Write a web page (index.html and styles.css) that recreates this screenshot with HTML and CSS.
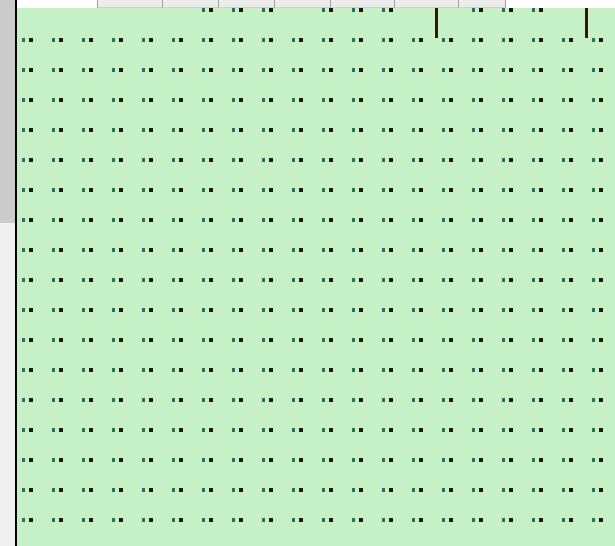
FILE: index.html
```html
<!DOCTYPE html>
<html>
<head>
<meta charset="utf-8">
<link rel="stylesheet" href="styles.css">
</head>
<body>
<div class="app">
  <aside class="side">
    <div class="side-top"></div>
    <div class="side-bottom"></div>
  </aside>
  <main class="main">
    <nav class="tabs">
      <span class="tab active"></span>
      <span class="tab w65"></span>
      <span class="tab w56"></span>
      <span class="tab w56"></span>
      <span class="tab w56"></span>
      <span class="tab w64"></span>
      <span class="tab w64"></span>
      <span class="tab w47 last"></span>
      <span class="tab-fill"></span>
    </nav>
    <section class="canvas">
      <div class="top-row">
        <i class="o"></i><i class="o"></i><i class="o"></i><i class="o"></i><i class="o"></i><i class="o"></i><i></i><i></i><i></i><i class="o"></i><i></i><i></i><i></i><i class="o"></i><i class="o"></i><i></i><i></i><i></i><i class="o"></i><i class="o"></i>
      </div>
      <div class="grid">
        <i></i><i></i><i></i><i></i><i></i><i></i><i></i><i></i><i></i><i></i><i></i><i></i><i></i><i></i><i></i><i></i><i></i><i></i><i></i><i></i>
        <i></i><i></i><i></i><i></i><i></i><i></i><i></i><i></i><i></i><i></i><i></i><i></i><i></i><i></i><i></i><i></i><i></i><i></i><i></i><i></i>
        <i></i><i></i><i></i><i></i><i></i><i></i><i></i><i></i><i></i><i></i><i></i><i></i><i></i><i></i><i></i><i></i><i></i><i></i><i></i><i></i>
        <i></i><i></i><i></i><i></i><i></i><i></i><i></i><i></i><i></i><i></i><i></i><i></i><i></i><i></i><i></i><i></i><i></i><i></i><i></i><i></i>
        <i></i><i></i><i></i><i></i><i></i><i></i><i></i><i></i><i></i><i></i><i></i><i></i><i></i><i></i><i></i><i></i><i></i><i></i><i></i><i></i>
        <i></i><i></i><i></i><i></i><i></i><i></i><i></i><i></i><i></i><i></i><i></i><i></i><i></i><i></i><i></i><i></i><i></i><i></i><i></i><i></i>
        <i></i><i></i><i></i><i></i><i></i><i></i><i></i><i></i><i></i><i></i><i></i><i></i><i></i><i></i><i></i><i></i><i></i><i></i><i></i><i></i>
        <i></i><i></i><i></i><i></i><i></i><i></i><i></i><i></i><i></i><i></i><i></i><i></i><i></i><i></i><i></i><i></i><i></i><i></i><i></i><i></i>
        <i></i><i></i><i></i><i></i><i></i><i></i><i></i><i></i><i></i><i></i><i></i><i></i><i></i><i></i><i></i><i></i><i></i><i></i><i></i><i></i>
        <i></i><i></i><i></i><i></i><i></i><i></i><i></i><i></i><i></i><i></i><i></i><i></i><i></i><i></i><i></i><i></i><i></i><i></i><i></i><i></i>
        <i></i><i></i><i></i><i></i><i></i><i></i><i></i><i></i><i></i><i></i><i></i><i></i><i></i><i></i><i></i><i></i><i></i><i></i><i></i><i></i>
        <i></i><i></i><i></i><i></i><i></i><i></i><i></i><i></i><i></i><i></i><i></i><i></i><i></i><i></i><i></i><i></i><i></i><i></i><i></i><i></i>
        <i></i><i></i><i></i><i></i><i></i><i></i><i></i><i></i><i></i><i></i><i></i><i></i><i></i><i></i><i></i><i></i><i></i><i></i><i></i><i></i>
        <i></i><i></i><i></i><i></i><i></i><i></i><i></i><i></i><i></i><i></i><i></i><i></i><i></i><i></i><i></i><i></i><i></i><i></i><i></i><i></i>
        <i></i><i></i><i></i><i></i><i></i><i></i><i></i><i></i><i></i><i></i><i></i><i></i><i></i><i></i><i></i><i></i><i></i><i></i><i></i><i></i>
        <i></i><i></i><i></i><i></i><i></i><i></i><i></i><i></i><i></i><i></i><i></i><i></i><i></i><i></i><i></i><i></i><i></i><i></i><i></i><i></i>
        <i></i><i></i><i></i><i></i><i></i><i></i><i></i><i></i><i></i><i></i><i></i><i></i><i></i><i></i><i></i><i></i><i></i><i></i><i></i><i></i>
      </div>
      <span class="bar bar-a"></span>
      <span class="bar bar-b"></span>
    </section>
  </main>
</div>
</body>
</html>
```

FILE: styles.css
```css
html, body {
  margin: 0;
  padding: 0;
  width: 615px;
  height: 546px;
  overflow: hidden;
  background: #c6f0c6;
  font-family: "Liberation Sans", Arial, sans-serif;
}

.app {
  display: flex;
  width: 615px;
  height: 546px;
}

.side {
  width: 15px;
  flex: none;
  display: flex;
  flex-direction: column;
  border-right: 2px solid #000;
}

.side-top {
  height: 223px;
  background: #cbcbcb;
}

.side-bottom {
  flex: 1;
  background: #efefef;
}

.main {
  flex: 1;
  display: flex;
  flex-direction: column;
  min-width: 0;
}

.tabs {
  display: flex;
  height: 8px;
  flex: none;
  background: #ffffff;
}

.tab {
  box-sizing: border-box;
  height: 8px;
  background: #ececec;
  border-left: 1px solid #9c9c9c;
  border-bottom: 1px solid #d0d0d0;
}

.tab.active {
  width: 80px;
  background: #ffffff;
  border: none;
}

.tab.last {
  border-right: 1px solid #9c9c9c;
}

.w65 { width: 65px; }
.w56 { width: 56px; }
.w64 { width: 64px; }
.w47 { width: 48px; }

.tab-fill {
  flex: 1;
  background: #ffffff;
}

.canvas {
  position: relative;
  flex: 1;
  background: #c6f0c6;
  display: flex;
  flex-direction: column;
}

.top-row,
.grid {
  display: grid;
  grid-template-columns: repeat(20, 30px);
  padding-left: 5px;
}

.top-row {
  height: 30px;
}

.grid {
  grid-auto-rows: 30px;
}

.top-row i,
.grid i {
  display: flex;
  align-items: flex-start;
  gap: 4px;
}

.top-row i::before,
.grid i::before {
  content: "";
  width: 3px;
  height: 4px;
  background: #2b6d63;
}

.top-row i::after,
.grid i::after {
  content: "";
  width: 4px;
  height: 4px;
  background: #1b1a05;
}

.top-row i.o {
  visibility: hidden;
}

.bar {
  position: absolute;
  top: 0;
  width: 3px;
  height: 30px;
  background: #2b1c06;
}

.bar-a { left: 418px; }
.bar-b { left: 568px; }
```
